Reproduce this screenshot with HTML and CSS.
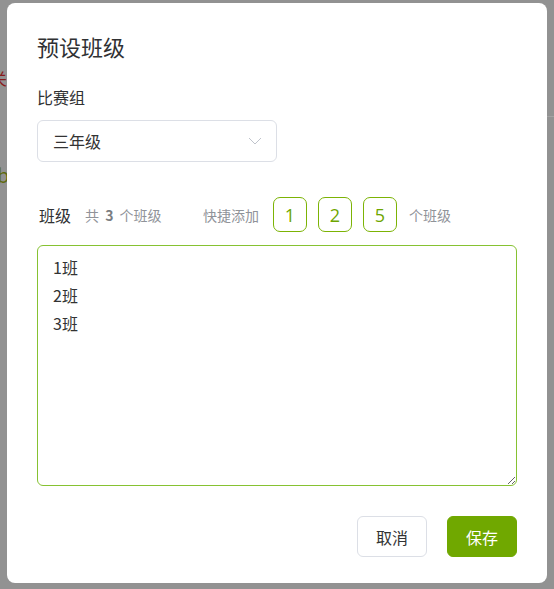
FILE: index.html
```html
<!DOCTYPE html>
<html lang="zh">
<head>
<meta charset="utf-8">
<title>预设班级</title>
<link rel="stylesheet" href="styles.css">
</head>
<body>
<div class="behind">
  <span class="bg-red">关</span>
  <span class="bg-olive">b</span>
  <span class="bg-line"></span>
</div>
<div class="dialog">
  <h2 class="title">预设班级</h2>
  <div class="label">比赛组</div>
  <div class="select">
    <span>三年级</span>
    <svg class="chev" width="14" height="8" viewBox="0 0 14 8"><path d="M1 1l6 6 6-6" fill="none" stroke="#c0c4cc" stroke-width="1"/></svg>
  </div>
  <div class="row">
    <span class="row-title">班级</span>
    <span class="count">共 <b>3</b> 个班级</span>
    <span class="quick">快捷添加</span>
    <span class="qbtn">1</span>
    <span class="qbtn">2</span>
    <span class="qbtn">5</span>
    <span class="unit">个班级</span>
  </div>
  <textarea class="classes">1班
2班
3班</textarea>
  <div class="footer">
    <button class="btn cancel">取消</button>
    <button class="btn save">保存</button>
  </div>
</div>
</body>
</html>
```
FILE: styles.css
```css
html, body {
  margin: 0;
  padding: 0;
}
body {
  background: #929292;
  font-family: "Noto Sans CJK SC", "Noto Sans", sans-serif;
  color: #333;
  width: 554px;
  height: 589px;
  overflow: hidden;
  position: relative;
}
.behind {
  position: absolute;
  inset: 0;
}
.bg-red {
  position: absolute;
  left: -9px;
  top: 66px;
  font-size: 16px;
  color: #8a1a1a;
}
.bg-olive {
  position: absolute;
  left: -3px;
  top: 160px;
  font-size: 20px;
  color: #5f6a10;
}
.bg-line {
  position: absolute;
  right: 0;
  top: 116px;
  width: 10px;
  height: 1px;
  background: #a3a3a3;
}
.dialog {
  position: relative;
  margin: 3px 0 0 7px;
  width: 540px;
  height: 580px;
  box-sizing: border-box;
  padding: 28px 30px 26px;
  background: #fff;
  border-radius: 8px;
  display: flex;
  flex-direction: column;
}
.title {
  margin: 0;
  font-size: 22px;
  font-weight: 400;
  line-height: 30px;
  color: #303133;
}
.label {
  margin-top: 24px;
  font-size: 16px;
  line-height: 24px;
  color: #303133;
}
.select {
  margin-top: 11px;
  width: 240px;
  height: 42px;
  box-sizing: border-box;
  border: 1px solid #dcdfe6;
  border-radius: 6px;
  display: flex;
  align-items: center;
  justify-content: space-between;
  padding: 0 14px 0 15px;
  font-size: 16px;
  color: #333;
}
.chev {
  display: block;
}
.row {
  margin-top: 35px;
  height: 35px;
  display: flex;
  align-items: center;
}
.row-title {
  margin-left: 2px;
  font-size: 16px;
  color: #303133;
}
.count {
  margin-left: 14px;
  width: 78px;
  white-space: nowrap;
  font-size: 14px;
  word-spacing: 3px;
  color: #909399;
}
.count b {
  color: #7a7d82;
}
.quick {
  margin-left: 40px;
  font-size: 14px;
  color: #909399;
}
.qbtn {
  margin-left: 11px;
  width: 34px;
  height: 35px;
  box-sizing: border-box;
  border: 1px solid #7cb305;
  border-radius: 7px;
  display: flex;
  align-items: center;
  justify-content: center;
  font-size: 18px;
  color: #6ea600;
  font-family: "Open Sans", "Noto Sans", sans-serif;
}
.quick + .qbtn {
  margin-left: 14px;
}
.unit {
  margin-left: 12px;
  font-size: 14px;
  color: #909399;
}
.classes {
  margin: 13px 0 0;
  width: 480px;
  height: 241px;
  box-sizing: border-box;
  border: 1px solid #86c232;
  border-radius: 6px;
  padding: 7px 15px;
  font-family: "Noto Sans CJK SC", "Noto Sans", sans-serif;
  font-size: 16px;
  line-height: 28px;
  color: #333;
  outline: none;
  resize: vertical;
}
.footer {
  margin-top: 30px;
  display: flex;
  justify-content: flex-end;
  gap: 20px;
}
.btn {
  width: 70px;
  height: 41px;
  box-sizing: border-box;
  border-radius: 6px;
  font-family: "Noto Sans CJK SC", "Noto Sans", sans-serif;
  font-size: 16px;
  padding: 0;
  cursor: pointer;
}
.cancel {
  background: #fff;
  border: 1px solid #dcdfe6;
  color: #333;
}
.save {
  background: #70a800;
  border: 1px solid #70a800;
  color: #fff;
}
```
